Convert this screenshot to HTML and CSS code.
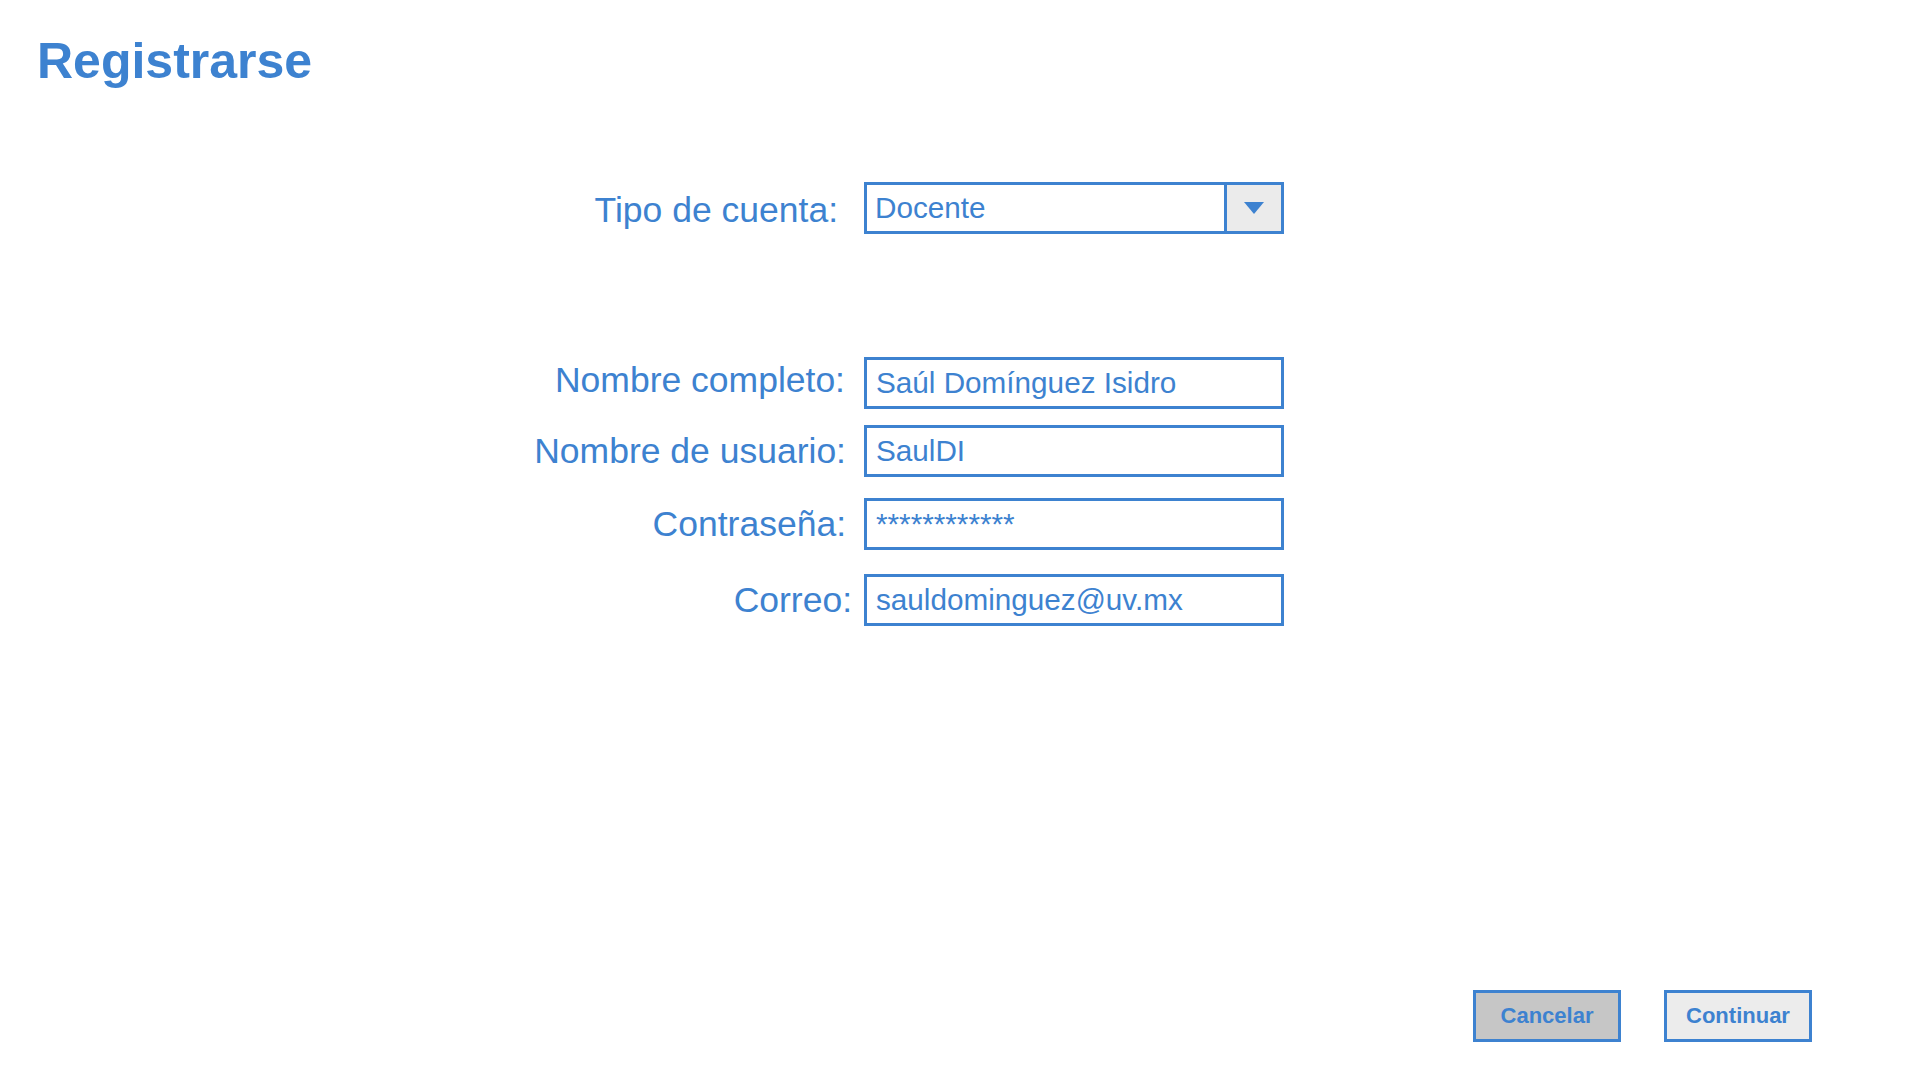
FILE: index.html
```html
<!DOCTYPE html>
<html lang="es">
<head>
<meta charset="utf-8">
<title>Registrarse</title>
<link rel="stylesheet" href="styles.css">
</head>
<body>
<main class="page">
  <h1 class="title">Registrarse</h1>
  <form class="form">
    <div class="row row-type">
      <label class="label label-type">Tipo de cuenta:</label>
      <div class="select">
        <span class="select-value">Docente</span>
        <span class="select-arrow">
          <svg width="20" height="12" viewBox="0 0 20 12"><polygon points="0,0 20,0 10,12" fill="#3d82d0"/></svg>
        </span>
      </div>
    </div>
    <div class="fields">
      <div class="row row-name">
        <label class="label label-name">Nombre completo:</label>
        <div class="input">Saúl Domínguez Isidro</div>
      </div>
      <div class="row row-user">
        <label class="label">Nombre de usuario:</label>
        <div class="input">SaulDI</div>
      </div>
      <div class="row row-pass">
        <label class="label">Contraseña:</label>
        <div class="input">************</div>
      </div>
      <div class="row row-mail">
        <label class="label label-mail">Correo:</label>
        <div class="input">sauldominguez@uv.mx</div>
      </div>
    </div>
  </form>
  <div class="actions">
    <button class="btn btn-cancel" type="button">Cancelar</button>
    <button class="btn btn-continue" type="button">Continuar</button>
  </div>
</main>
</body>
</html>
```
FILE: styles.css
```css
* { box-sizing: border-box; }
html, body { margin: 0; padding: 0; background: #ffffff; }
body {
  font-family: "Liberation Sans", Arial, sans-serif;
  color: #3d82d0;
}
.page {
  height: 1080px;
  display: flex;
  flex-direction: column;
}
.title {
  margin: 31px 0 0 37px;
  font-size: 50px;
  line-height: 60px;
  font-weight: bold;
  color: #3d82d0;
}
.form {
  margin-top: 91px;
  display: flex;
  flex-direction: column;
}
.row {
  display: grid;
  grid-template-columns: 846px 420px;
  column-gap: 18px;
  align-items: start;
}
.label {
  text-align: right;
  font-size: 35.5px;
  line-height: 52px;
  white-space: nowrap;
}
.label-type { padding-right: 8px; padding-top: 2px; }
.label-name { padding-right: 1px; margin-top: -3px; }
.label-mail { margin-right: -6px; }
.fields {
  margin-top: 121px;
  display: flex;
  flex-direction: column;
}
.row-user { margin-top: 16px; }
.row-pass { margin-top: 21px; }
.row-mail { margin-top: 24px; }
.input, .select {
  height: 52px;
  border: 3px solid #3d82d0;
  background: #ffffff;
  font-size: 29.7px;
  line-height: 46px;
  padding-left: 9px;
  white-space: nowrap;
}
.select {
  display: flex;
  padding-left: 0;
}
.select-value {
  flex: 1;
  padding-left: 8px;
}
.select-arrow {
  width: 57px;
  border-left: 3px solid #3d82d0;
  background: #ebebeb;
  display: flex;
  align-items: center;
  justify-content: center;
}
.select-arrow svg { display: block; }
.actions {
  margin-top: auto;
  display: flex;
  justify-content: flex-end;
  gap: 43px;
  padding: 0 108px 38px 0;
}
.btn {
  width: 148px;
  height: 52px;
  border: 3px solid #3d82d0;
  font-family: "Liberation Sans", Arial, sans-serif;
  font-weight: bold;
  font-size: 22px;
  color: #3d82d0;
  padding: 0;
  border-radius: 0;
}
.btn-cancel { background: #c6c6c6; }
.btn-continue { background: #ececec; }
```
